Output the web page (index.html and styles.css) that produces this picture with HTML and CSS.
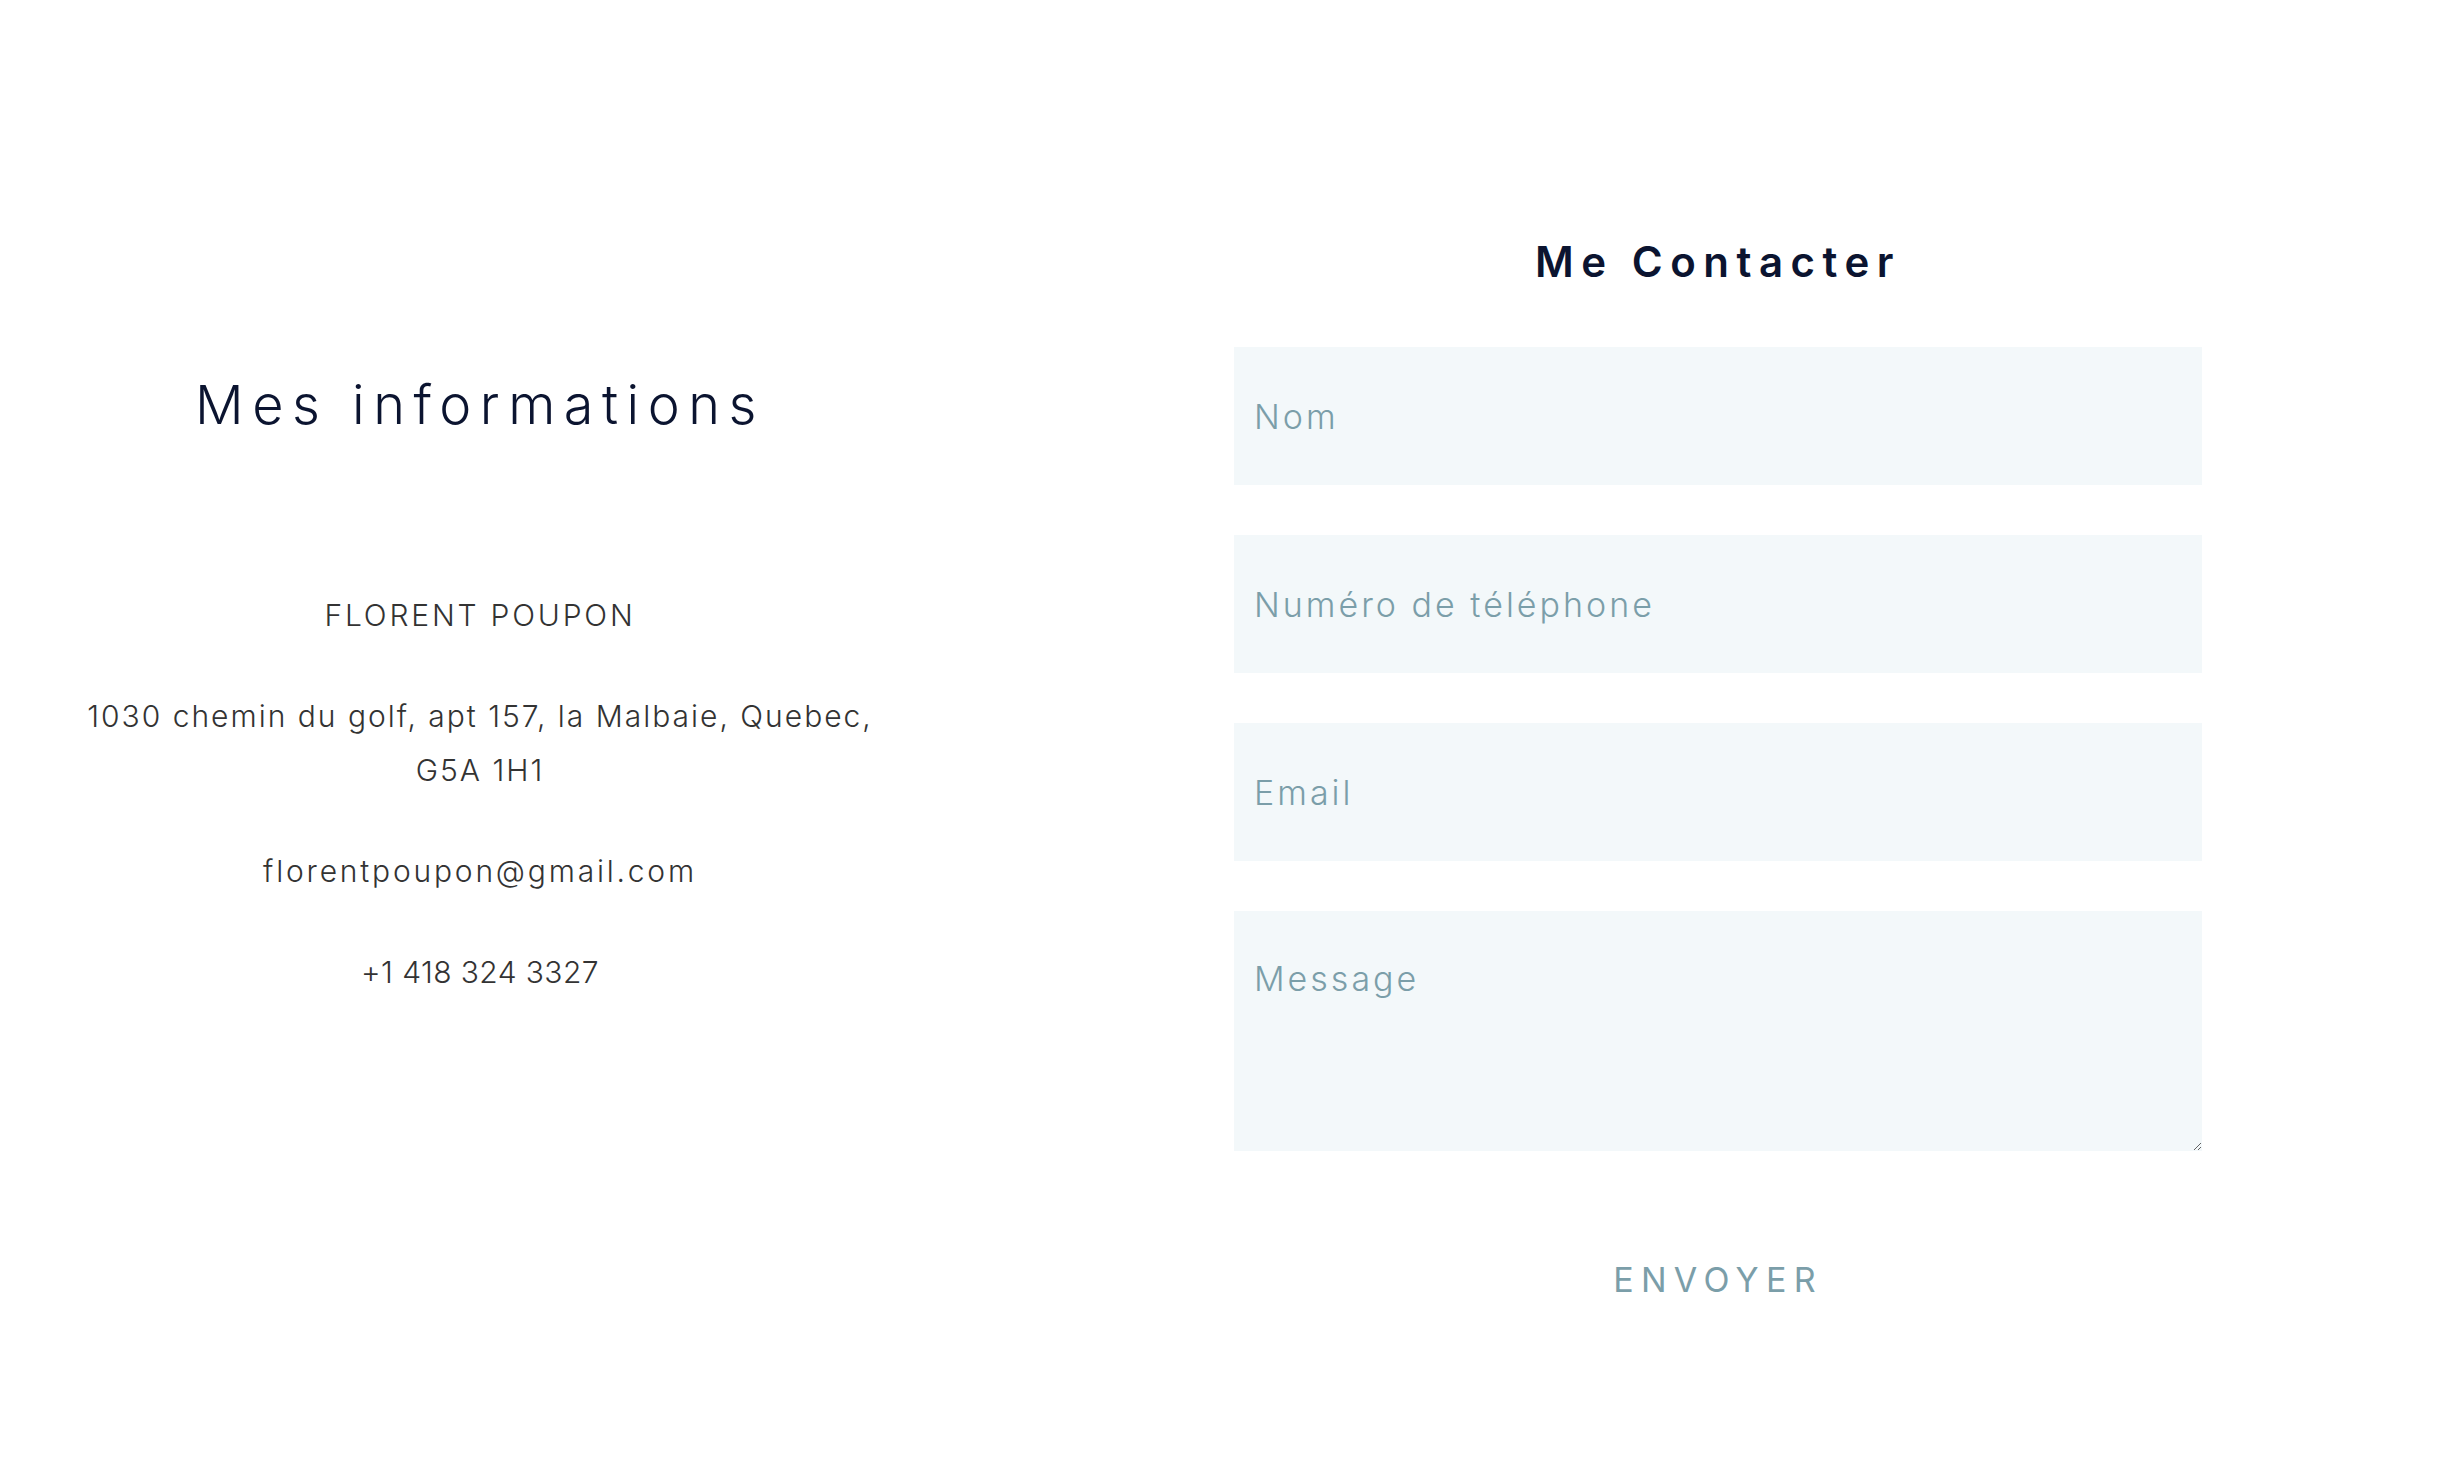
FILE: index.html
```html
<!DOCTYPE html>
<html lang="fr">
<head>
<meta charset="utf-8">
<title>Contact</title>
<link rel="stylesheet" href="styles.css">
</head>
<body>
<main class="page">
  <section class="info">
    <h1 class="info-title">Mes informations</h1>
    <div class="info-body">
      <p>FLORENT POUPON</p>
      <p class="info-address">1030 chemin du golf, apt 157, la Malbaie, Quebec, G5A 1H1</p>
      <p>florentpoupon@gmail.com</p>
      <p class="info-phone">+1 418 324 3327</p>
    </div>
  </section>
  <section class="contact">
    <h2 class="contact-title">Me Contacter</h2>
    <form class="contact-form">
      <input class="field" type="text" placeholder="Nom">
      <input class="field" type="tel" placeholder="Numéro de téléphone">
      <input class="field" type="email" placeholder="Email">
      <textarea class="field field-message" placeholder="Message"></textarea>
      <button class="send" type="button">ENVOYER</button>
    </form>
  </section>
</main>
</body>
</html>
```
FILE: styles.css
```css
* { box-sizing: border-box; }
html, body { margin: 0; padding: 0; background: #fff; }
body { font-family: Inter, "Open Sans", sans-serif; }

.page {
  display: flex;
  align-items: flex-start;
  width: 2452px;
  min-height: 1460px;
}

.info {
  width: 960px;
  padding-top: 378px;
  text-align: center;
}
.info-title {
  margin: 0;
  font-size: 54px;
  line-height: 1;
  font-weight: 300;
  letter-spacing: 8.5px;
  color: #0b1430;
}
.info-body {
  width: 800px;
  margin: 156px auto 0;
  font-size: 30px;
  line-height: 54px;
  font-weight: 300;
  letter-spacing: 2.8px;
  color: #333;
}
.info-body p { margin: 0 0 47px; }
.info-body .info-address { letter-spacing: 2px; }
.info-body .info-phone { letter-spacing: 0.4px; }

.contact {
  margin-left: 274px;
  width: 968px;
  padding-top: 241px;
}
.contact-title {
  margin: 0 0 64px;
  text-align: center;
  font-size: 42px;
  line-height: 1;
  font-weight: 600;
  letter-spacing: 7.5px;
  color: #0b1430;
}
.contact-form {
  display: flex;
  flex-direction: column;
  gap: 50px;
}
.field {
  display: block;
  width: 100%;
  height: 138px;
  padding: 0 20px;
  border: none;
  outline: none;
  background: #f3f8fa;
  font-family: inherit;
  font-size: 34px;
  font-weight: 300;
  letter-spacing: 3px;
  color: #333;
}
.field::placeholder { color: #7b9ea9; opacity: 1; }
.field-message {
  height: 240px;
  padding: 47px 20px 0;
  resize: vertical;
}
.send {
  align-self: center;
  margin-top: 62px;
  padding: 0;
  border: none;
  background: none;
  font-family: inherit;
  font-size: 34px;
  line-height: 1;
  font-weight: 400;
  letter-spacing: 7.3px;
  color: #7b9ea9;
  cursor: pointer;
}
```
